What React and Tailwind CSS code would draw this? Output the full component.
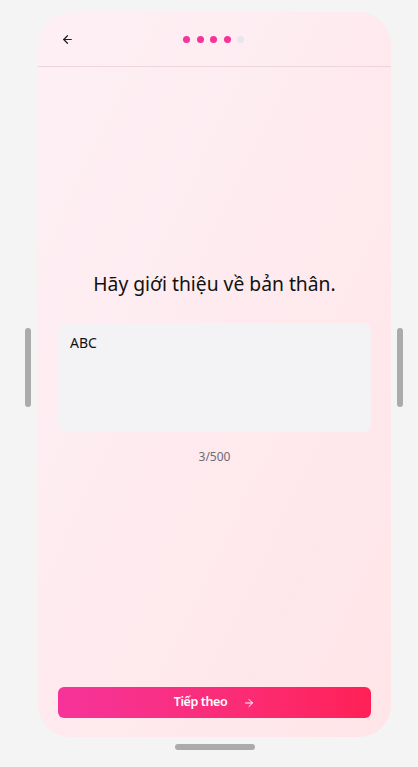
import React from "react";

export default function App() {
  return (
    <div
      className="w-[418px] h-[767px] bg-[#f4f4f4] overflow-hidden"
      style={{ fontFamily: '"Noto Sans", "Open Sans", sans-serif' }}
    >
      <div className="flex flex-row items-start pl-[25px] pt-[12px]">
        <div className="w-[6px] h-[79px] mt-[316px] rounded-full bg-[#ababab]" />
        <div className="flex flex-col items-center ml-[7px]">
          <div className="w-[353px] h-[725px] rounded-[32px] bg-gradient-to-br from-[#fdf0f5] to-[#ffe5e8] flex flex-col overflow-hidden">
            <div className="h-[55px] flex items-center relative border-b border-[#ecd5dc] shrink-0">
              <div className="pl-[23px] flex items-center">
                <svg width="13" height="13" viewBox="0 0 24 24" fill="none" stroke="#1f1f1f" strokeWidth="2.2" strokeLinecap="round" strokeLinejoin="round">
                  <path d="M12 19l-7-7 7-7" />
                  <path d="M19 12H5" />
                </svg>
              </div>
              <div className="absolute left-[145px] top-[24px] flex gap-[6.6px]">
                <div className="w-[7px] h-[7px] rounded-full bg-[#f6339a]" />
                <div className="w-[7px] h-[7px] rounded-full bg-[#f6339a]" />
                <div className="w-[7px] h-[7px] rounded-full bg-[#f6339a]" />
                <div className="w-[7px] h-[7px] rounded-full bg-[#f6339a]" />
                <div className="w-[7px] h-[7px] rounded-full bg-[#e5e7eb]" />
              </div>
            </div>
            <div className="flex-1 flex flex-col px-[20px] pt-[203px]">
              <div className="text-center text-[19.3px] leading-[28px] text-[#111]">
                Hãy giới thiệu về bản thân.
              </div>
              <div className="mt-[25px] h-[109px] rounded-[8px] bg-[#f3f3f5] px-[12px] pt-[10px] text-[14px] leading-[20px] text-[#111]">
                ABC
              </div>
              <div className="mt-[17px] text-center text-[12px] leading-[16px] text-[#6b6b73]">
                3/500
              </div>
            </div>
            <div className="px-[20px] pb-[19px]">
              <button className="w-full h-[31px] rounded-[6px] bg-gradient-to-r from-[#f6339a] to-[#ff2056] flex items-center justify-center gap-[16px] text-white text-[12.5px] tracking-[-0.4px] font-semibold">
                <span>Tiếp theo</span>
                <svg width="12" height="12" viewBox="0 0 24 24" fill="none" stroke="white" strokeWidth="2" strokeLinecap="round" strokeLinejoin="round">
                  <path d="M5 12h14" />
                  <path d="M12 5l7 7-7 7" />
                </svg>
              </button>
            </div>
          </div>
          <div className="mt-[7px] w-[80px] h-[6px] rounded-full bg-[#ababab]" />
        </div>
        <div className="w-[6px] h-[79px] mt-[316px] ml-[6px] rounded-full bg-[#ababab]" />
      </div>
    </div>
  );
}
